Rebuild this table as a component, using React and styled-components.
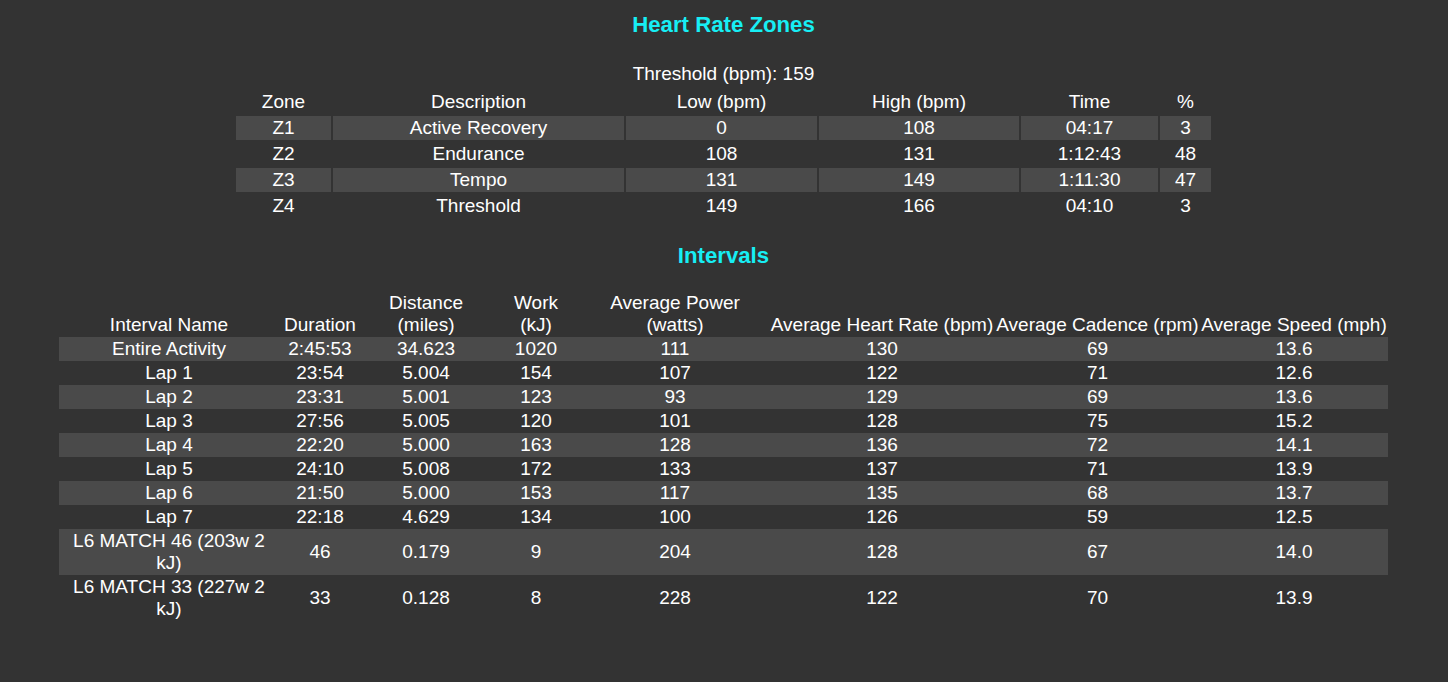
import React from "react";
import styled, { createGlobalStyle } from "styled-components";

const GlobalStyle = createGlobalStyle`
  html, body {
    margin: 0;
    padding: 0;
    background: #333333;
  }
  body {
    font-family: "Liberation Sans", Arial, Helvetica, sans-serif;
    font-size: 19px;
    color: #ffffff;
  }
`;

const Page = styled.div`
  display: flex;
  flex-direction: column;
  align-items: center;
  min-height: 682px;
  padding-right: 1px;
  box-sizing: border-box;
`;

const Title = styled.h3`
  margin: ${(p) => p.$top}px 0 ${(p) => p.$bottom}px;
  font-size: 22.2px;
  line-height: normal;
  font-weight: bold;
  color: #17eef4;
  text-align: center;
`;

const Table = styled.table`
  width: ${(p) => p.$width}px;
  table-layout: fixed;
  border-collapse: separate;
  border-spacing: ${(p) => p.$spacing}px;
  font-size: 19px;
  line-height: normal;
`;

const Caption = styled.caption`
  padding: 0 0 3px;
  text-align: center;
`;

const Col = styled.col`
  width: ${(p) => p.$w}px;
`;

const Th = styled.th`
  padding: 1px;
  font-weight: normal;
  text-align: center;
  vertical-align: bottom;
  white-space: nowrap;
`;

const Row = styled.tr`
  background: ${(p) => (p.$striped ? "#4a4a4a" : "transparent")};
`;

const ZoneCell = styled.td`
  padding: 1px;
  text-align: center;
  vertical-align: middle;
  background: ${(p) => (p.$striped ? "#4a4a4a" : "transparent")};
`;

const Td = styled.td`
  padding: 1px;
  text-align: center;
  vertical-align: middle;
`;

const zones = [
  ["Z1", "Active Recovery", "0", "108", "04:17", "3"],
  ["Z2", "Endurance", "108", "131", "1:12:43", "48"],
  ["Z3", "Tempo", "131", "149", "1:11:30", "47"],
  ["Z4", "Threshold", "149", "166", "04:10", "3"],
];

const zoneCols = [95, 291, 191, 200, 137, 51];
const zoneHeads = ["Zone", "Description", "Low (bpm)", "High (bpm)", "Time", "%"];

const intervalCols = [220, 82, 130, 90, 188, 226, 205, 188];
const intervalHeads = [
  ["Interval Name"],
  ["Duration"],
  ["Distance", "(miles)"],
  ["Work", "(kJ)"],
  ["Average Power", "(watts)"],
  ["Average Heart Rate (bpm)"],
  ["Average Cadence (rpm)"],
  ["Average Speed (mph)"],
];

const intervals = [
  ["Entire Activity", "2:45:53", "34.623", "1020", "111", "130", "69", "13.6"],
  ["Lap 1", "23:54", "5.004", "154", "107", "122", "71", "12.6"],
  ["Lap 2", "23:31", "5.001", "123", "93", "129", "69", "13.6"],
  ["Lap 3", "27:56", "5.005", "120", "101", "128", "75", "15.2"],
  ["Lap 4", "22:20", "5.000", "163", "128", "136", "72", "14.1"],
  ["Lap 5", "24:10", "5.008", "172", "133", "137", "71", "13.9"],
  ["Lap 6", "21:50", "5.000", "153", "117", "135", "68", "13.7"],
  ["Lap 7", "22:18", "4.629", "134", "100", "126", "59", "12.5"],
  ["L6 MATCH 46 (203w 2 kJ)", "46", "0.179", "9", "204", "128", "67", "14.0"],
  ["L6 MATCH 33 (227w 2 kJ)", "33", "0.128", "8", "228", "122", "70", "13.9"],
];

export default function App() {
  return (
    <>
      <GlobalStyle />
      <Page>
        <Title $top={11.8} $bottom={25.2}>
          Heart Rate Zones
        </Title>
        <Table $width={979} $spacing={2}>
          <Caption>Threshold (bpm): 159</Caption>
          <colgroup>
            {zoneCols.map((w, i) => (
              <Col key={i} $w={w} />
            ))}
          </colgroup>
          <thead>
            <tr>
              {zoneHeads.map((h) => (
                <Th key={h}>{h}</Th>
              ))}
            </tr>
          </thead>
          <tbody>
            {zones.map((z, i) => (
              <tr key={z[0]}>
                {z.map((v, j) => (
                  <ZoneCell key={j} $striped={i % 2 === 0}>
                    {v}
                  </ZoneCell>
                ))}
              </tr>
            ))}
          </tbody>
        </Table>

        <Title $top={23.3} $bottom={21.4}>
          Intervals
        </Title>
        <Table $width={1329} $spacing={0}>
          <colgroup>
            {intervalCols.map((w, i) => (
              <Col key={i} $w={w} />
            ))}
          </colgroup>
          <thead>
            <tr>
              {intervalHeads.map((lines, i) => (
                <Th key={i}>
                  {lines.map((l, k) => (
                    <React.Fragment key={k}>
                      {k > 0 && <br />}
                      {l}
                    </React.Fragment>
                  ))}
                </Th>
              ))}
            </tr>
          </thead>
          <tbody>
            {intervals.map((r, i) => (
              <Row key={i} $striped={i % 2 === 0}>
                {r.map((v, j) => (
                  <Td key={j}>{v}</Td>
                ))}
              </Row>
            ))}
          </tbody>
        </Table>
      </Page>
    </>
  );
}
